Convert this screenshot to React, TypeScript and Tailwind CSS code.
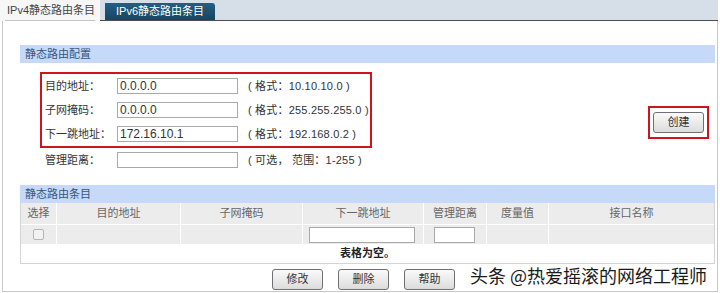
import React from "react";

const rows = [
  { label: "目的地址：", value: "0.0.0.0", hint: "( 格式：10.10.10.0 )" },
  { label: "子网掩码：", value: "0.0.0.0", hint: "( 格式：255.255.255.0 )" },
  { label: "下一跳地址：", value: "172.16.10.1", hint: "( 格式：192.168.0.2 )" },
];

function FieldRow({ label, value, hint }: { label: string; value: string; hint: string }) {
  return (
    <div className="flex items-center h-[24px] whitespace-nowrap">
      <span className="w-[72px] shrink-0">{label}</span>
      <input
        readOnly
        value={value}
        className="w-[121px] h-[16px] shrink-0 border border-[#a9a9a9] px-[2px] text-[12px] text-[#333] outline-none"
      />
      <span className="ml-[10px] tracking-[0.2px]">{hint}</span>
    </div>
  );
}

function Btn({ children }: { children: React.ReactNode }) {
  return (
    <button className="w-[51px] h-[21px] rounded-[3px] border border-[#707070] bg-gradient-to-b from-[#fafafa] to-[#dcdcdc] text-[11px] text-[#333] leading-[19px]">
      {children}
    </button>
  );
}

const cols = [
  { name: "选择", w: "w-[36px]" },
  { name: "目的地址", w: "w-[124px]" },
  { name: "子网掩码", w: "w-[122px]" },
  { name: "下一跳地址", w: "w-[121px]" },
  { name: "管理距离", w: "w-[63px]" },
  { name: "度量值", w: "w-[62px]" },
  { name: "接口名称", w: "flex-1" },
];

export default function App() {
  return (
    <div className="relative w-[720px] h-[293px] overflow-hidden bg-white text-[11px] text-[#333] font-['Liberation_Sans','Noto_Sans_CJK_SC',sans-serif]">
      {/* tabs */}
      <div className="flex h-[21px] whitespace-nowrap">
        <div className="w-[100px] pl-[5px] bg-[#f7f7f7]">
          <div className="w-[90px] h-[21px] border-b border-[#c4c4c4] pl-[2px] leading-[20px] text-[#444]">
            IPv4静态路由条目
          </div>
        </div>
        <div className="flex-1 mr-[2px] flex items-end bg-[#d6dee7] border-b border-[#4d4d4d]">
          <div className="ml-[5px] w-[110px] h-[17px] rounded-tr-[3px] bg-gradient-to-b from-[#235f83] to-[#17465f] text-center leading-[17px] text-white">
            IPv6静态路由条目
          </div>
        </div>
      </div>

      {/* panel */}
      <div className="mx-[2px] h-[271px] border-x border-b border-[#c8c8c8] pl-[17px] pr-[2px] flex flex-col">
        <div className="mt-[24px] h-[18px] bg-[#c6d9f8] pl-[5px] leading-[18px] text-[#35557e]">静态路由配置</div>

        <div className="mt-[9px] flex items-center justify-between">
          <div className="ml-[20px]">
            <div className="w-[332px] border-2 border-[#d0141e] pl-[3px]">
              {rows.map((r) => (
                <FieldRow key={r.label} {...r} />
              ))}
            </div>
            <div className="pl-[5px]">
              <FieldRow label="管理距离：" value="" hint="( 可选， 范围：1-255 )" />
            </div>
          </div>
          <div className="mr-[6px] border-2 border-[#d0141e] px-[3px] py-[4px]">
            <Btn>创建</Btn>
          </div>
        </div>

        <div className="mt-[13px] h-[18px] bg-[#c6d9f8] pl-[5px] leading-[18px] text-[#35557e]">静态路由条目</div>

        <div className="border border-t-0 border-[#d4d4d4]">
          <div className="flex h-[21px] bg-[#ececec] text-[#666]">
            {cols.map((c) => (
              <div key={c.name} className={`${c.w} border-r border-white text-center leading-[21px] last:border-r-0`}>
                {c.name}
              </div>
            ))}
          </div>
          <div className="flex h-[20px] bg-[#ececec] border-t border-white">
            <div className="w-[36px] border-r border-white flex items-center justify-center">
              <span className="w-[11px] h-[11px] rounded-[2px] border border-[#b5b5b5] bg-[#f2f2f2]" />
            </div>
            <div className="w-[124px] border-r border-white" />
            <div className="w-[122px] border-r border-white" />
            <div className="w-[121px] border-r border-white pl-[6px] flex items-center">
              <span className="w-[106px] h-[16px] border border-[#a9a9a9] bg-white" />
            </div>
            <div className="w-[63px] border-r border-white pl-[10px] flex items-center">
              <span className="w-[41px] h-[16px] border border-[#a9a9a9] bg-white" />
            </div>
            <div className="w-[62px] border-r border-white" />
            <div className="flex-1" />
          </div>
          <div className="h-[19px] bg-white text-center font-bold leading-[19px] text-[#222]">表格为空。</div>
        </div>

        <div className="mt-[5px] ml-[252px] flex gap-[15px]">
          <Btn>修改</Btn>
          <Btn>删除</Btn>
          <Btn>帮助</Btn>
        </div>
      </div>

      {/* watermark */}
      <div className="absolute left-[470px] top-[261px] whitespace-nowrap text-[18px] leading-[28px] text-[#1a1a1a] font-['Noto_Sans_CJK_SC',sans-serif] [text-shadow:0_0_2px_#fff]">
        头条 @热爱摇滚的网络工程师
      </div>
    </div>
  );
}
